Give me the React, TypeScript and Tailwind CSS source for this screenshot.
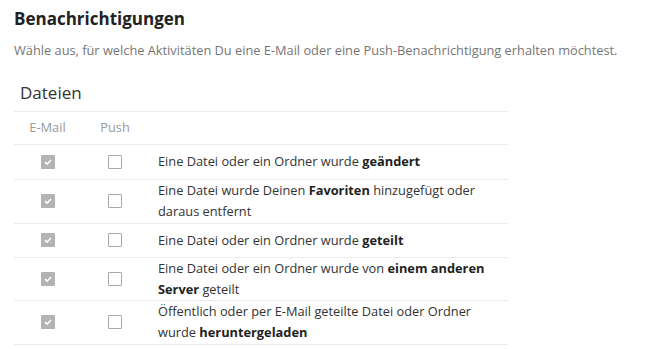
const rows = [
  [<>Eine Datei oder ein Ordner wurde <b>geändert</b></>, "h-[35px]"],
  [<>Eine Datei wurde Deinen <b>Favoriten</b> hinzugefügt oder daraus entfernt</>, "h-[44px]"],
  [<>Eine Datei oder ein Ordner wurde <b>geteilt</b></>, "h-[34px]"],
  [<>Eine Datei oder ein Ordner wurde von <b>einem anderen Server</b> geteilt</>, "h-[43px]"],
  [<>Öffentlich oder per E-Mail geteilte Datei oder Ordner wurde <b>heruntergeladen</b></>, "h-[44px]"],
] as const;

function CheckedBox() {
  return (
    <div className="flex justify-center">
      <span className="flex w-[14px] h-[14px] items-center justify-center bg-[#b3b3b3] rounded-[1px]">
        <svg width="10" height="10" viewBox="0 0 10 10">
          <path d="M2 5.2 L4.1 7.2 L8 3" fill="none" stroke="#fff" strokeWidth="1.6" />
        </svg>
      </span>
    </div>
  );
}

function EmptyBox() {
  return (
    <div className="flex justify-center">
      <span className="block w-[14px] h-[14px] border border-[#a8a8a8] rounded-[1px] bg-white" />
    </div>
  );
}

export default function App() {
  return (
    <div className="bg-white min-h-screen px-[14px] pt-[6px] text-[#333] font-['Open_Sans',sans-serif]">
      {/* Header */}
      <h2 className="text-[17px] font-bold leading-[26px] text-[#222]">Benachrichtigungen</h2>
      <p className="mt-[8px] text-[12.8px] leading-[20px] text-[#767676]">
        Wähle aus, für welche Aktivitäten Du eine E-Mail oder eine Push-Benachrichtigung erhalten möchtest.
      </p>

      {/* Table */}
      <div className="mt-[14px] w-[494px]">
        <div className="h-[38px] flex items-center pl-[6px] text-[17px] border-b border-[#ebebeb]">Dateien</div>
        <table className="w-full border-collapse text-[12.8px]">
          <thead>
            <tr className="h-[32px] border-b border-[#ebebeb] text-[#999]">
              <th className="w-[67px] font-normal">E-Mail</th>
              <th className="w-[68px] font-normal">Push</th>
              <th></th>
            </tr>
          </thead>
          <tbody>
            {rows.map(([text, h], i) => (
              <tr key={i} className={`${h} border-b border-[#ebebeb]`}>
                <td className="align-middle">
                  <CheckedBox />
                </td>
                <td className="align-middle">
                  <EmptyBox />
                </td>
                <td className="pl-[9px] pr-[8px] leading-[21px] [&_b]:font-bold [&_b]:text-[#222]">{text}</td>
              </tr>
            ))}
          </tbody>
        </table>
      </div>
    </div>
  );
}
